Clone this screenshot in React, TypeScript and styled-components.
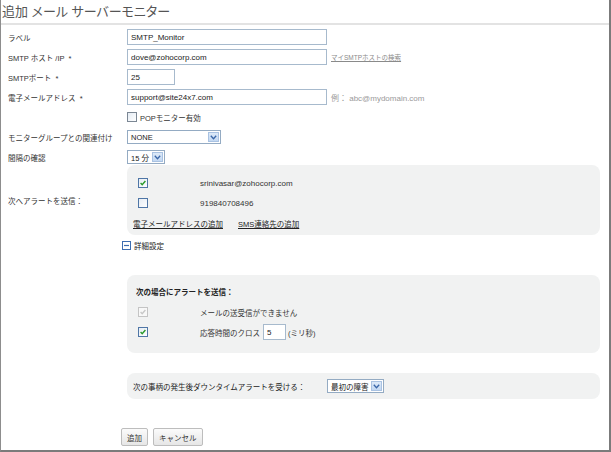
import { createGlobalStyle } from "styled-components";
import styled from "styled-components";

const GlobalStyle = createGlobalStyle`
  html, body {
    margin: 0;
    padding: 0;
    background: #ffffff;
  }
  body {
    font-family: "Liberation Sans", "Noto Sans CJK JP", sans-serif;
    font-size: 7.5px;
    color: #333333;
  }
`;

type CheckProps = {
  checked?: boolean;
  disabled?: boolean;
  plain?: boolean;
};

// 小さなチェックボックス（画像の青枠＋緑チェック）
function CheckBox({ checked, disabled, plain }: CheckProps) {
  const stroke = disabled ? "#c4c4c4" : plain ? "#7b8794" : "#4f76a6";
  const tick = disabled ? "#c8c8c8" : "#2a9a2a";
  return (
    <svg width="10" height="10" viewBox="0 0 10 10">
      <defs>
        <linearGradient id="cbfill" x1="0" y1="0" x2="1" y2="1">
          <stop offset="0" stopColor="#e4ebf3" />
          <stop offset="1" stopColor="#ffffff" />
        </linearGradient>
      </defs>
      <rect
        x="0.5"
        y="0.5"
        width="9"
        height="9"
        fill={disabled ? "#f8f8f8" : "url(#cbfill)"}
        stroke={stroke}
      />
      {checked && (
        <path
          d="M2.6 5.1 L4.2 6.8 L7.4 3.0"
          fill="none"
          stroke={tick}
          strokeWidth="1.4"
        />
      )}
    </svg>
  );
}

function SelectBox({ value, width }: { value: string; width: number }) {
  return (
    <Select $width={width}>
      <span className="value">{value}</span>
      <span className="arrow">
        <svg width="7" height="5" viewBox="0 0 7 5">
          <path d="M0.8 0.8 L3.5 3.8 L6.2 0.8" fill="none" stroke="#3a66a8" strokeWidth="1.3" />
        </svg>
      </span>
    </Select>
  );
}

function App() {
  return (
    <>
      <GlobalStyle />
      <Frame>
        <Title>追加 メール サーバーモニター</Title>

        <Form>
          <FieldRow>
            <Label>ラベル</Label>
            <Field>
              <TextInput $width={200} defaultValue="SMTP_Monitor" />
            </Field>
          </FieldRow>

          <FieldRow>
            <Label>SMTP ホスト /IP &nbsp;*</Label>
            <Field>
              <TextInput $width={200} defaultValue="dove@zohocorp.com" />
              <SmallLink>マイSMTPホストの検索</SmallLink>
            </Field>
          </FieldRow>

          <FieldRow>
            <Label>SMTPポート &nbsp;*</Label>
            <Field>
              <TextInput $width={48} defaultValue="25" />
            </Field>
          </FieldRow>

          <FieldRow>
            <Label>電子メールアドレス &nbsp;*</Label>
            <Field>
              <TextInput $width={200} defaultValue="support@site24x7.com" />
              <Hint>例： abc@mydomain.com</Hint>
            </Field>
          </FieldRow>

          <FieldRow>
            <Label />
            <Field>
              <CheckLabel>
                <CheckBox plain />
                <span>POPモニター有効</span>
              </CheckLabel>
            </Field>
          </FieldRow>

          <FieldRow>
            <Label>モニターグループとの関連付け</Label>
            <Field>
              <SelectBox value="NONE" width={94} />
            </Field>
          </FieldRow>

          <FieldRow $last>
            <Label>間隔の確認</Label>
            <Field>
              <SelectBox value="15 分" width={38} />
            </Field>
          </FieldRow>

          <FieldRow>
            <Label>次へアラートを送信：</Label>
            <GrayBox $pad="8px 0 2px 6px">
              <BoxRow>
                <CheckCell>
                  <CheckBox checked />
                </CheckCell>
                <Latin>srinivasar@zohocorp.com</Latin>
              </BoxRow>
              <BoxRow>
                <CheckCell>
                  <CheckBox />
                </CheckCell>
                <Latin>919840708496</Latin>
              </BoxRow>
              <BoxRow>
                <ActionLink>電子メールアドレスの追加</ActionLink>
                <ActionLink>SMS連絡先の追加</ActionLink>
              </BoxRow>
            </GrayBox>
          </FieldRow>

          <Toggle>
            <svg width="9" height="9" viewBox="0 0 9 9">
              <rect x="0.5" y="0.5" width="8" height="8" fill="#ffffff" stroke="#3d6db0" />
              <path d="M2 4.5 H7" stroke="#3d6db0" strokeWidth="1.2" />
            </svg>
            <span>詳細設定</span>
          </Toggle>

          <Indented>
            <GrayBox $pad="13px 0 11px 9px" $top={24}>
              <BoxHeading>次の場合にアラートを送信：</BoxHeading>
              <BoxRow>
                <CheckCell $shift={2}>
                  <CheckBox checked disabled />
                </CheckCell>
                <span>メールの送受信ができません</span>
              </BoxRow>
              <BoxRow>
                <CheckCell $shift={2}>
                  <CheckBox checked />
                </CheckCell>
                <span>応答時間のクロス</span>
                <TextInput $width={23} defaultValue="5" />
                <span>(ミリ秒)</span>
              </BoxRow>
            </GrayBox>

            <GrayBox $pad="0 0 0 6px" $top={20}>
              <DowntimeRow>
                <span className="text">次の事柄の発生後ダウンタイムアラートを受ける：</span>
                <SelectBox value="最初の障害" width={57} />
              </DowntimeRow>
            </GrayBox>
          </Indented>

          <Buttons>
            <Button>追加</Button>
            <Button>キャンセル</Button>
          </Buttons>
        </Form>
      </Frame>
    </>
  );
}

export default App;

// Style
const Frame = styled.div`
  width: 611px;
  height: 452px;
  box-sizing: border-box;
  border-left: 1px solid #8d8d8d;
  border-right: 2px solid #7b7b7b;
  border-bottom: 2px solid #7b7b7b;
  background: #ffffff;
  overflow: hidden;
`;

const Title = styled.h1`
  margin: 0;
  padding-left: 1px;
  height: 23px;
  line-height: 23px;
  font-size: 13px;
  font-weight: normal;
  color: #555555;
  font-feature-settings: "palt";
  border-bottom: 2px solid #e3e3e3;
`;

const Form = styled.div`
  padding: 4px 9px 0 7px;
`;

const FieldRow = styled.div<{ $last?: boolean }>`
  display: grid;
  grid-template-columns: 119px 1fr;
  align-items: center;
  min-height: 16px;
  margin-bottom: ${(p) => (p.$last ? "0" : "4px")};
`;

const Label = styled.div`
  color: #333333;
  white-space: nowrap;
`;

const Field = styled.div`
  display: flex;
  align-items: center;
  gap: 4px;
`;

const Latin = styled.span`
  font-size: 8px;
  color: #333333;
`;

const TextInput = styled.input<{ $width: number }>`
  width: ${(p) => p.$width}px;
  height: 16px;
  box-sizing: border-box;
  border: 1px solid #a7bacd;
  padding: 0 3px;
  font: inherit;
  font-size: 8px;
  color: #222222;
  background: #ffffff;
  outline: none;
`;

const SmallLink = styled.span`
  font-size: 6.5px;
  color: #8a8a8a;
  text-decoration: underline;
`;

const Hint = styled.span`
  font-size: 8px;
  color: #9a9a9a;
`;

const CheckLabel = styled.label`
  display: flex;
  align-items: center;
  gap: 3px;

  svg {
    display: block;
  }
`;

const Select = styled.div<{ $width: number }>`
  width: ${(p) => p.$width}px;
  height: 14px;
  box-sizing: border-box;
  border: 1px solid #94abc3;
  background: #ffffff;
  display: flex;
  align-items: center;
  justify-content: space-between;
  padding: 0 1px 0 3px;

  .value {
    color: #222222;
    white-space: nowrap;
    font-size: 7.5px;
  }

  .arrow {
    flex: none;
    width: 11px;
    height: 10px;
    box-sizing: border-box;
    background: linear-gradient(#dce9f8, #c3d8f2);
    border: 1px solid #a9c2e2;
    display: flex;
    align-items: center;
    justify-content: center;
  }
`;

const GrayBox = styled.div<{ $pad: string; $top?: number }>`
  background: #f1f2f2;
  border-radius: 8px;
  padding: ${(p) => p.$pad};
  margin-top: ${(p) => p.$top ?? 0}px;
`;

const BoxRow = styled.div`
  display: flex;
  align-items: center;
  height: 20px;

  input {
    margin: 0 2px 0 3px;
  }
`;

const CheckCell = styled.div<{ $shift?: number }>`
  width: 62px;
  margin-left: ${(p) => p.$shift ?? 5}px;
  display: flex;
  align-items: center;

  svg {
    display: block;
  }
`;

const ActionLink = styled.span`
  color: #222222;
  text-decoration: underline;
  margin-right: 15px;
`;

const BoxHeading = styled.div`
  height: 10px;
  line-height: 10px;
  font-weight: bold;
  color: #222222;
  margin-bottom: 4px;
`;

const Toggle = styled.div`
  display: flex;
  align-items: center;
  gap: 3px;
  height: 12px;
  margin: 3px 0 0 114px;
  color: #222222;

  svg {
    display: block;
  }
`;

const Indented = styled.div`
  margin-left: 119px;
`;

const DowntimeRow = styled.div`
  height: 26px;
  display: flex;
  align-items: center;

  .text {
    width: 194px;
    color: #222222;
    white-space: nowrap;
  }
`;

const Buttons = styled.div`
  display: flex;
  gap: 5px;
  margin: 29px 0 0 113px;
`;

const Button = styled.button`
  height: 18px;
  padding: 0 5px;
  font: inherit;
  font-size: 7.5px;
  color: #333333;
  background: linear-gradient(#fbfbfb, #e6e6e6);
  border: 1px solid #bdbdbd;
  border-radius: 2px;
`;
